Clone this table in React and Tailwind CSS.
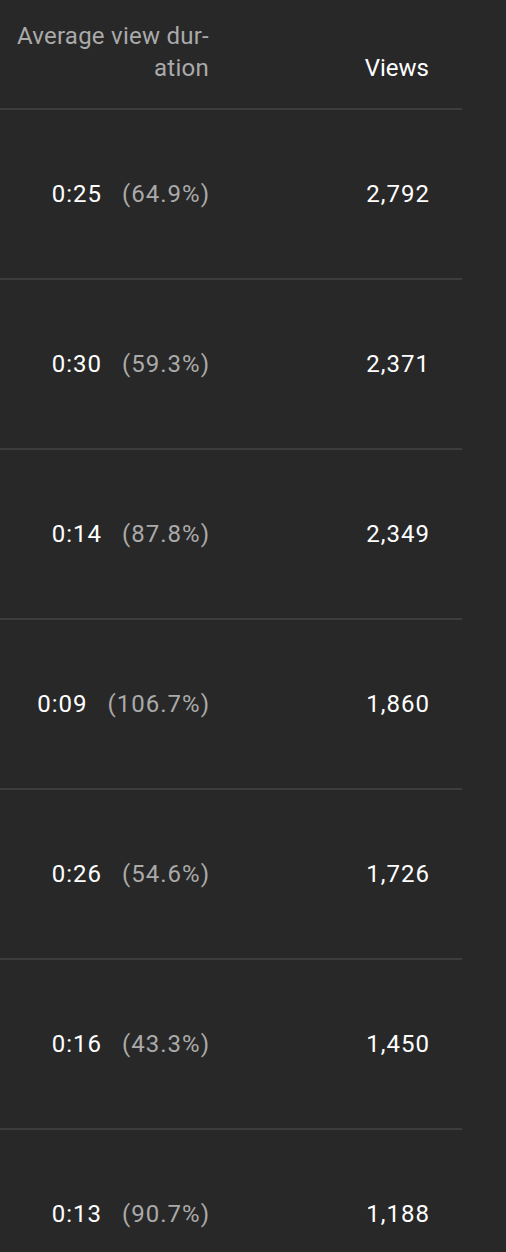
import React from "react";

const rows = [
  { dur: "0:25", pct: "(64.9%)", views: "2,792" },
  { dur: "0:30", pct: "(59.3%)", views: "2,371" },
  { dur: "0:14", pct: "(87.8%)", views: "2,349" },
  { dur: "0:09", pct: "(106.7%)", views: "1,860" },
  { dur: "0:26", pct: "(54.6%)", views: "1,726" },
  { dur: "0:16", pct: "(43.3%)", views: "1,450" },
  { dur: "0:13", pct: "(90.7%)", views: "1,188" },
];

export default function App() {
  return (
    <div className="min-h-screen bg-[#282828] text-white font-['Roboto',sans-serif] font-normal text-[24px] leading-[32px]">
      <div className="w-[462px]">
        {/* HEADER */}
        <div className="flex items-end pt-[20px] pb-[24px] border-b-2 border-[#3d3d3d]">
          <div className="w-[209px] text-right text-[#aaaaaa] tracking-[0.25px]">
            Average view dur-
            <br />
            ation
          </div>
          <div className="flex-1 text-right pr-[33px] text-white">Views</div>
        </div>

        {/* ROWS */}
        {rows.map((r, idx) => (
          <div key={idx} className="flex items-center h-[170px] border-b-2 border-[#3d3d3d] tracking-[1px]">
            <div className="w-[210px] flex justify-end gap-[20px]">
              <span className="text-white">{r.dur}</span>
              <span className="text-[#aaaaaa]">{r.pct}</span>
            </div>
            <div className="flex-1 text-right pr-[32px]">{r.views}</div>
          </div>
        ))}
      </div>
    </div>
  );
}
